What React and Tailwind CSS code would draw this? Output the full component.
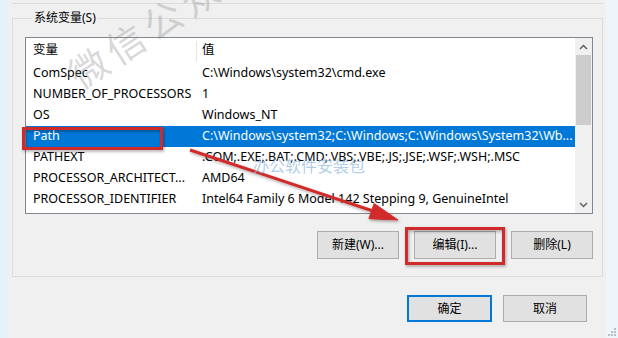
const rows = [
  { name: "ComSpec", value: "C:\\Windows\\system32\\cmd.exe" },
  { name: "NUMBER_OF_PROCESSORS", value: "1" },
  { name: "OS", value: "Windows_NT" },
  {
    name: "Path",
    value: "C:\\Windows\\system32;C:\\Windows;C:\\Windows\\System32\\Wb...",
    selected: true,
  },
  { name: "PATHEXT", value: ".COM;.EXE;.BAT;.CMD;.VBS;.VBE;.JS;.JSE;.WSF;.WSH;.MSC" },
  { name: "PROCESSOR_ARCHITECT...", value: "AMD64" },
  { name: "PROCESSOR_IDENTIFIER", value: "Intel64 Family 6 Model 142 Stepping 9, GenuineIntel" },
];

function WinButton({ children, focused }) {
  return (
    <button
      className={`flex h-[28px] w-[82px] items-center justify-center bg-[#e1e1e1] text-[12px] ${
        focused ? "border-2 border-[#0078d7]" : "border border-[#adadad]"
      }`}
    >
      {children}
    </button>
  );
}

function Overlay() {
  return (
    <svg className="pointer-events-none absolute inset-0" width="618" height="338">
      <defs>
        <filter id="sh" x="-20%" y="-20%" width="140%" height="140%">
          <feDropShadow dx="1" dy="1.5" stdDeviation="1.5" floodColor="#000" floodOpacity="0.35" />
        </filter>
      </defs>
      <g filter="url(#sh)" stroke="#d12b2b" fill="none" strokeWidth="3">
        <rect x="23.5" y="128.5" width="138" height="20" />
        <rect x="406.5" y="228.5" width="97" height="35" />
        <line x1="190" y1="150" x2="373" y2="211" />
        <polygon points="398,220 368.9,218.7 374.1,203.5" fill="#d12b2b" strokeWidth="1" />
      </g>
      <g fill="#bdbdbd">
        <rect x="611" y="331" width="2" height="2" />
        <rect x="608" y="334" width="2" height="2" />
        <rect x="611" y="334" width="2" height="2" />
        <rect x="614" y="328" width="2" height="2" />
        <rect x="614" y="331" width="2" height="2" />
        <rect x="614" y="334" width="2" height="2" />
      </g>
    </svg>
  );
}

export default function App() {
  return (
    <div className="relative flex h-[338px] w-[618px] overflow-hidden bg-[#f0f0f0] font-['Noto_Sans','Noto_Sans_CJK_SC',sans-serif] text-[12.5px] text-black">
      <div className="w-[7px] shrink-0 bg-[#e4f3fb]" />

      <div className="flex min-w-0 flex-1 flex-col pl-[5px] pr-[3px]">
        <div className="h-[4px] border-b border-[#dcdcdc]" />

        <fieldset className="mt-[5px] border border-[#dcdcdc] pb-[17px] pl-[12px] pr-[9px] pt-[10px]">
          <legend className="ml-[7px] px-[2px] text-[12px] leading-[18px]">系统变量(S)</legend>

          <div className="flex h-[177px] border border-[#828790] bg-white">
            <div className="min-w-0 flex-1">
              <div className="flex h-[25px] items-center">
                <div className="w-[170px] pl-[7px]">变量</div>
                <div className="h-[20px] w-px bg-[#e5e5e5]" />
                <div className="pl-[5px]">值</div>
              </div>
              {rows.map((r) => (
                <div
                  key={r.name}
                  className={`flex h-[21px] items-center whitespace-nowrap ${
                    r.selected ? "bg-[#0078d7] text-white" : ""
                  }`}
                >
                  <div className="w-[171px] shrink-0 pl-[7px]">{r.name}</div>
                  <div className="pl-[5px]">{r.value}</div>
                </div>
              ))}
            </div>

            <div className="flex w-[17px] shrink-0 flex-col bg-[#f0f0f0]">
              <div className="flex h-[17px] items-center justify-center">
                <svg width="9" height="6" viewBox="0 0 9 6">
                  <path d="M1 5 L4.5 1.5 L8 5" stroke="#606060" strokeWidth="1.5" fill="none" />
                </svg>
              </div>
              <div className="mx-[1px] h-[70px] bg-[#cdcdcd]" />
              <div className="flex-1" />
              <div className="flex h-[17px] items-center justify-center">
                <svg width="9" height="6" viewBox="0 0 9 6">
                  <path d="M1 1 L4.5 4.5 L8 1" stroke="#606060" strokeWidth="1.5" fill="none" />
                </svg>
              </div>
            </div>
          </div>

          <div className="mt-[17px] flex justify-end gap-[15px]">
            <WinButton>新建(W)...</WinButton>
            <WinButton>编辑(I)...</WinButton>
            <WinButton>删除(L)</WinButton>
          </div>
        </fieldset>

        <div className="mr-[16px] mt-[18px] flex justify-end gap-[11px]">
          <button className="flex h-[27px] w-[85px] items-center justify-center border-2 border-[#0078d7] bg-[#e1e1e1] text-[12px]">
            确定
          </button>
          <button className="flex h-[27px] w-[84px] items-center justify-center border border-[#adadad] bg-[#e1e1e1] text-[12px]">
            取消
          </button>
        </div>
      </div>

      <div className="w-[12px] shrink-0 bg-[#eef6fb]" />

      <Overlay />

      <div className="pointer-events-none absolute left-[72px] top-[58px] origin-left -rotate-[33deg] whitespace-nowrap font-['Noto_Sans_CJK_SC',sans-serif] text-[38px] leading-none tracking-[6px] text-[#8f8f8f]/35">
        微信公众号
      </div>
      <div className="pointer-events-none absolute left-[253px] top-[157px] whitespace-nowrap font-['Noto_Sans_CJK_SC',sans-serif] text-[16px] leading-none text-[#8fb8e0]/70">
        办公软件安装包
      </div>
    </div>
  );
}
